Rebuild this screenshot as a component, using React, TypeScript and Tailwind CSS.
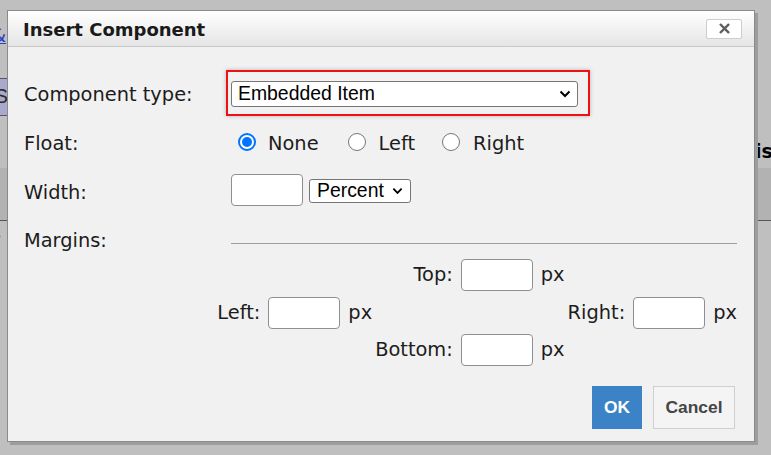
import React from "react";

const Chevron = ({ className = "" }: { className?: string }) => (
  <svg viewBox="0 0 12 8" className={className} fill="none" stroke="currentColor" strokeWidth={2}>
    <path d="M1.5 1.5 6 6l4.5-4.5" />
  </svg>
);

const Radio = ({ checked }: { checked?: boolean }) =>
  checked ? (
    <span className="mb-[5px] flex h-[18px] w-[18px] items-center justify-center rounded-full border-2 border-[#0075ff] bg-white">
      <span className="h-[10px] w-[10px] rounded-full bg-[#0075ff]" />
    </span>
  ) : (
    <span className="mb-[5px] h-[18px] w-[18px] rounded-full border-[1.5px] border-[#767676] bg-white" />
  );

const TextBox = () => (
  <div className="h-[32px] w-[72px] shrink-0 rounded-[4px] border border-[#8f8f8f] bg-white" />
);

const MarginField = ({ label, start }: { label: string; start?: boolean }) => (
  <div className={`flex items-center gap-2 ${start ? "justify-start" : "justify-end"}`}>
    <span>{label}:</span>
    <TextBox />
    <span>px</span>
  </div>
);

export default function App() {
  return (
    <div className="relative h-[455px] w-[771px] overflow-hidden bg-[#bfbfbf] font-['DejaVu_Sans',sans-serif] text-[19.4px] text-[#1c1c1c]">
      {/* page behind the overlay */}
      <div className="flex flex-col">
        <div className="h-[25px]" />
        <a className="-ml-[9px] leading-[22px] text-[#2b3fc2] underline">&amp;</a>
        <div className="h-[31px]" />
        <div className="-ml-[30px] flex h-[38px] w-[120px] items-center justify-end border-y border-[#55556e] bg-[#a9a9cb] pr-[82px] font-['Liberation_Sans',sans-serif] text-[#2a2a2a]">
          <span>IS</span>
        </div>
        <div className="h-[24px]" />
        <div className="whitespace-nowrap pl-[755px] text-[19px] font-bold leading-[22px] text-black">isual</div>
        <div className="h-[6px]" />
        <div className="h-[53px] border-b border-[#555] bg-[#b2b2b2]" />
        <div className="-ml-[7px] pt-[4px] text-[15px] leading-[18px] text-[#333]">s</div>
      </div>

      {/* dialog */}
      <div className="absolute left-[7px] top-[10px] flex h-[432px] w-[748px] flex-col border border-[#8a8a8a] bg-[#f1f1f1] shadow-[3px_3px_0_#9d9d9d]">
        <div className="flex h-[36px] shrink-0 items-center justify-between border-b border-[#c9c9c9] bg-gradient-to-b from-white to-[#e5e5e5] pl-[15px] pr-[12px]">
          <h1 className="mt-px text-[18px] font-bold text-[#1a1a1a]">Insert Component</h1>
          <button className="flex h-[20px] w-[36px] items-center justify-center rounded-[2px] border border-[#cdcdcd] bg-white text-[#5e5e5e]">
            <svg viewBox="0 0 12 12" className="h-[11px] w-[11px]" stroke="currentColor" strokeWidth={2.6} strokeLinecap="square">
              <path d="M2 2l8 8M10 2l-8 8" />
            </svg>
          </button>
        </div>

        <div className="flex flex-col pl-[16px] pr-[17px]">
          <div className="mt-[23px] flex h-[46px] items-center">
            <label className="mt-[3px] w-[202px] shrink-0">Component type:</label>
            <div className="flex h-[46px] w-[364px] items-start border-2 border-[#ee1111] pl-[3px] pr-[10px] pt-[9px] shadow-[0_0_4px_rgba(0,0,0,0.25)]">
              <div className="flex h-[26px] w-full items-center justify-between rounded-[3px] border border-[#767676] bg-white pl-[6px] pr-[6px] font-['Liberation_Sans',sans-serif] text-[19.4px] text-black">
                <span>Embedded Item</span>
                <Chevron className="h-[8px] w-[12px]" />
              </div>
            </div>
          </div>

          <div className="mt-[8px] flex h-[40px] items-center">
            <label className="w-[214px] shrink-0">Float:</label>
            <Radio checked />
            <span className="ml-[12px]">None</span>
            <span className="ml-[29px]" />
            <Radio />
            <span className="ml-[13px]">Left</span>
            <span className="ml-[27px]" />
            <Radio />
            <span className="ml-[13px]">Right</span>
          </div>

          <div className="mt-[10px] flex h-[32px] items-center">
            <label className="mt-[6px] w-[207px] shrink-0">Width:</label>
            <TextBox />
            <div className="ml-[6px] mt-[2px] flex h-[24px] w-[102px] items-center justify-between rounded-[3px] border border-[#767676] bg-white pl-[7px] pr-[7px] font-['Liberation_Sans',sans-serif] text-[19.4px] text-black">
              <span>Percent</span>
              <Chevron className="h-[8px] w-[11px]" />
            </div>
          </div>

          <div className="mt-[25px] flex h-[20px] items-center">
            <label className="w-[207px] shrink-0">Margins:</label>
            <div className="mt-[4px] h-px flex-1 bg-[#a0a0a0]" />
          </div>

          <div className="mt-[8px] grid grid-cols-[auto_auto_auto] grid-rows-[32px_32px_32px] justify-end gap-x-[3px] gap-y-[5.5px]">
            <div />
            <MarginField label="Top" />
            <div />
            <MarginField label="Left" start />
            <div />
            <MarginField label="Right" />
            <div />
            <MarginField label="Bottom" />
            <div />
          </div>

          <div className="mr-[2px] mt-[20px] flex justify-end gap-[11px] font-['Liberation_Sans',sans-serif] text-[17.4px] font-bold">
            <button className="h-[43px] w-[50px] bg-[#3b83c6] text-white">OK</button>
            <button className="h-[43px] w-[82px] border border-[#cfcfcf] bg-[#f4f4f4] text-[#454545]">Cancel</button>
          </div>
        </div>
      </div>
    </div>
  );
}
